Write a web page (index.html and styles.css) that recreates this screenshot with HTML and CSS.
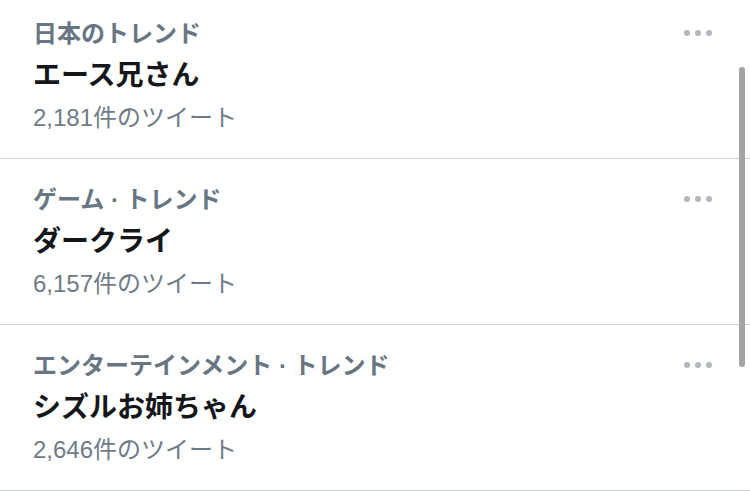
FILE: index.html
```html
<!DOCTYPE html>
<html lang="ja">

<head>
    <meta charset="UTF-8">
    <title>トレンド</title>
    <link rel="stylesheet" href="styles.css">
</head>

<body>
    <div class="trends">
        <div class="trend">
            <div class="trend-top">
                <span class="trend-category">日本のトレンド</span>
                <span class="more"><i></i><i></i><i></i></span>
            </div>
            <div class="trend-name">エース兄さん</div>
            <div class="trend-count">2,181件のツイート</div>
        </div>

        <div class="trend">
            <div class="trend-top">
                <span class="trend-category">ゲーム · トレンド</span>
                <span class="more"><i></i><i></i><i></i></span>
            </div>
            <div class="trend-name">ダークライ</div>
            <div class="trend-count">6,157件のツイート</div>
        </div>

        <div class="trend">
            <div class="trend-top">
                <span class="trend-category">エンターテインメント · トレンド</span>
                <span class="more"><i></i><i></i><i></i></span>
            </div>
            <div class="trend-name">シズルお姉ちゃん</div>
            <div class="trend-count">2,646件のツイート</div>
        </div>
    </div>

    <div class="scrollbar"></div>
</body>

</html>
```
FILE: styles.css
```css
body,
html {
    margin: 0;
    padding: 0;
    background-color: #fff;
    font-family: "Liberation Sans", "Noto Sans CJK JP", sans-serif;
    overflow: hidden;
}

.trends {
    margin-top: -7px;
    /* a lista está um pouco rolada */
}

.trend {
    padding: 20px 38px 19px 33px;
    border-bottom: 1px solid #cfd2d6;
}

.trend-top {
    display: flex;
    justify-content: space-between;
    align-items: center;
}

.trend-category {
    font-size: 24px;
    line-height: 42px;
    font-weight: bold;
    color: #687683;
}

.trend-name {
    font-size: 28px;
    line-height: 42px;
    font-weight: bold;
    color: #14171a;
}

.trend-count {
    font-size: 24px;
    line-height: 42px;
    color: #6f7c88;
}

.more {
    display: flex;
    gap: 5px;
    margin-top: -2px;
}

.more i {
    display: block;
    width: 6px;
    height: 6px;
    border-radius: 50%;
    background-color: #b3b8bf;
}

.scrollbar {
    position: absolute;
    top: 67px;
    right: 5px;
    width: 6px;
    height: 300px;
    border-radius: 3px;
    background-color: #a3a3a3;
}
```
